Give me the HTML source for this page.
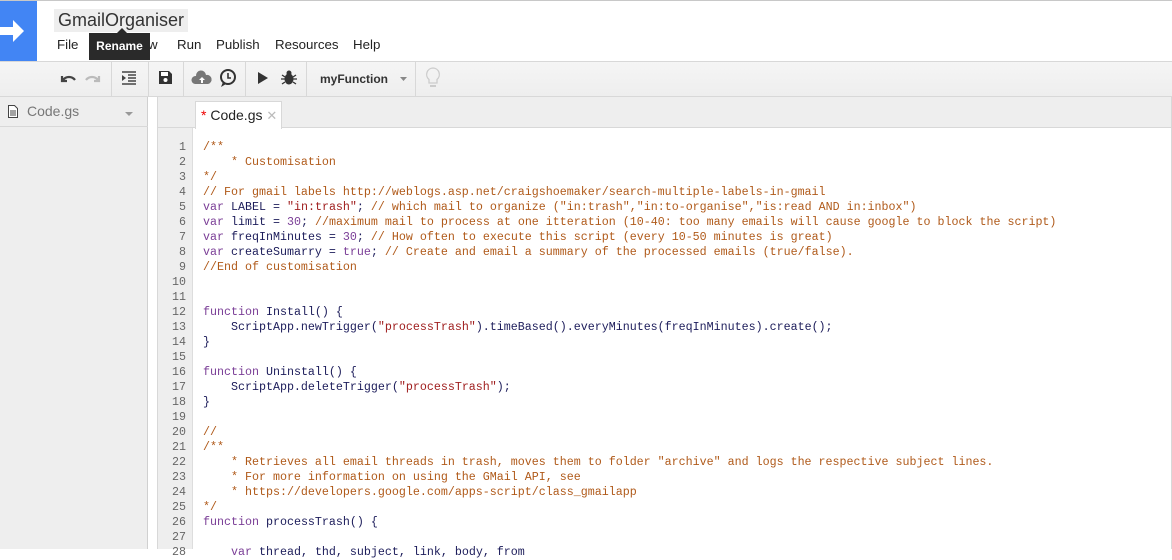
<!DOCTYPE html>
<html><head><meta charset="utf-8"><style>
*{margin:0;padding:0;box-sizing:border-box}
body{width:1172px;height:549px;overflow:hidden;background:#fff;font-family:"Liberation Sans",Arial,sans-serif;position:relative}
.abs{position:absolute}
#topline{left:0;top:0;width:1172px;height:1px;background:#c8c8c8}
#logo{left:0;top:1px;width:37px;height:60px;background:#4285f4}
#title{left:54px;top:9px;height:23px;padding:0 4px;background:#eee;font-size:18px;color:#333;line-height:23px}
.menu{top:37px;font-size:13.3px;color:#222}
#tip{left:89px;top:33px;width:61px;height:27px;background:#2a2a2a;color:#fff;font-size:12px;font-weight:bold;text-align:center;line-height:27px}
#tb{left:0;top:61px;width:1172px;height:36px;background:linear-gradient(#f5f5f5,#eee);border-top:1px solid #d8d8d8;border-bottom:1px solid #d8d8d8}
.sep{top:62px;width:1px;height:35px;background:#d8d8d8}
#side{left:0;top:97px;width:148px;height:452px;background:#eee;border-right:1px solid #d0d0d0}
#sidehead{left:0;top:97px;width:148px;height:30px;border-bottom:1px solid #d8d8d8}
#tabs{left:157px;top:97px;width:1015px;height:31px;background:#eee;border-bottom:1px solid #d8d8d8;border-left:1px solid #d8d8d8}
#tab{left:195px;top:101px;width:87px;height:28px;background:#fff;border:1px solid #d8d8d8;border-bottom:none;font-size:14px;color:#222;line-height:26px;padding-left:5px}
#gut{left:157px;top:128px;width:36px;height:421px;background:#eee;border-right:1px solid #ddd;border-left:1px solid #d8d8d8}
#rb{left:1171px;top:97px;width:1px;height:452px;background:#d8d8d8}
pre{font-family:"Liberation Mono",monospace;font-size:11.67px;line-height:15px}
#nums{left:157px;top:140px;width:29px;text-align:right;color:#666}
#code{left:203px;top:140px;color:#1c1c5a}
.k{color:#7a3d96}.c{color:#b05a1a}.s{color:#a02020}.n{color:#7a3d96}
</style></head><body>
<div class="abs" id="topline"></div>
<div class="abs" id="logo"><svg width="37" height="60"><path d="M0 26h13v-7l11 11-11 11v-7H0z" fill="#fff"/></svg></div>
<div class="abs" id="title">GmailOrganiser</div>
<div class="abs menu" style="left:57px">File</div>
<div class="abs menu" style="left:148px">w</div>
<div class="abs menu" style="left:177px">Run</div>
<div class="abs menu" style="left:216px">Publish</div>
<div class="abs menu" style="left:275px">Resources</div>
<div class="abs menu" style="left:353px">Help</div>
<div class="abs" id="tip">Rename</div>
<svg class="abs" style="left:116px;top:27px" width="12" height="7"><path d="M0 7L6 1L12 7z" fill="#2a2a2a"/></svg>
<div class="abs" id="tb"></div>
<div class="abs sep" style="left:111px"></div><div class="abs sep" style="left:148px"></div><div class="abs sep" style="left:183px"></div><div class="abs sep" style="left:245px"></div><div class="abs sep" style="left:306px"></div><div class="abs sep" style="left:415px"></div>
<svg class="abs" style="left:58px;top:70px" width="50" height="18"><path d="M4 6v5h5M5 10c3-4 9-4 12 0" stroke="#444" stroke-width="2.2" fill="none"/><path d="M41 6v5h-5M40 10c-3-4-9-4-12 0" stroke="#bbb" stroke-width="2.2" fill="none"/></svg>
<svg class="abs" style="left:120px;top:70px" width="18" height="16"><path d="M2 2h14M8 5h8M8 8h8M8 11h8M2 14h14" stroke="#444" stroke-width="1.5"/><path d="M2 5l4 3-4 3z" fill="#444"/></svg>
<svg class="abs" style="left:158px;top:70px" width="15" height="15"><path d="M1 1h10l3 3v10H1z" fill="#333"/><rect x="3" y="2" width="7" height="4" fill="#fff"/><circle cx="7.5" cy="10" r="2" fill="#fff"/></svg>
<svg class="abs" style="left:191px;top:68px" width="48" height="20"><path d="M4 16a4 4 0 0 1 1-8a5 5 0 0 1 10-1a4 4 0 0 1 2 9z" fill="#777"/><path d="M8 12l3-3 3 3h-2v3h-2v-3z" fill="#fff"/><circle cx="37" cy="9" r="7" fill="none" stroke="#333" stroke-width="2"/><path d="M37 5v5h3" stroke="#333" stroke-width="1.6" fill="none"/><path d="M32 14l-2 5 5-3" fill="#333"/></svg>
<svg class="abs" style="left:257px;top:71px" width="12" height="14"><path d="M1 1l10 6-10 6z" fill="#333"/></svg>
<svg class="abs" style="left:281px;top:69px" width="16" height="17"><ellipse cx="8" cy="10" rx="4.5" ry="5.5" fill="#333"/><circle cx="8" cy="4" r="2.5" fill="#333"/><path d="M1 6l3 2M15 6l-3 2M0 10h4M16 10h-4M1 15l3-2M15 15l-3-2" stroke="#333" stroke-width="1.3"/></svg>
<div class="abs" style="left:320px;top:72px;font-size:12px;font-weight:bold;color:#333">myFunction</div>
<svg class="abs" style="left:400px;top:77px" width="7" height="4"><path d="M0 0h7L3.5 4z" fill="#888"/></svg>
<svg class="abs" style="left:425px;top:67px" width="16" height="23"><path d="M8 1a6.5 6.5 0 0 0-4 11.5V16h8v-3.5A6.5 6.5 0 0 0 8 1z" fill="none" stroke="#ccc" stroke-width="1.3"/><rect x="5" y="18" width="6" height="2" fill="#ccc"/></svg>
<div class="abs" id="side"></div>
<div class="abs" id="sidehead"></div>
<svg class="abs" style="left:8px;top:105px" width="10" height="13"><path d="M.5.5h6l3 3v9h-9z" fill="#fff" stroke="#444"/><path d="M2 6h6M2 8h6M2 10h6" stroke="#444"/></svg>
<div class="abs" style="left:27px;top:103px;font-size:14px;color:#777">Code.gs</div>
<svg class="abs" style="left:125px;top:112px" width="8" height="4"><path d="M0 0h8L4 4z" fill="#999"/></svg>
<div class="abs" id="tabs"></div>
<div class="abs" id="tab"><span style="color:#e00">*</span> Code.gs <span style="color:#bbb;font-size:13px">✕</span></div>
<div class="abs" id="gut"></div>
<div class="abs" id="rb"></div>
<pre class="abs" id="nums">1
2
3
4
5
6
7
8
9
10
11
12
13
14
15
16
17
18
19
20
21
22
23
24
25
26
27
28</pre>
<pre class="abs" id="code"><span class="c">/**
    * Customisation
*/
// For gmail labels http://weblogs.asp.net/craigshoemaker/search-multiple-labels-in-gmail</span>
<span class="k">var</span> LABEL = <span class="s">"in:trash"</span>; <span class="c">// which mail to organize ("in:trash","in:to-organise","is:read AND in:inbox")</span>
<span class="k">var</span> limit = <span class="n">30</span>; <span class="c">//maximum mail to process at one itteration (10-40: too many emails will cause google to block the script)</span>
<span class="k">var</span> freqInMinutes = <span class="n">30</span>; <span class="c">// How often to execute this script (every 10-50 minutes is great)</span>
<span class="k">var</span> createSumarry = <span class="k">true</span>; <span class="c">// Create and email a summary of the processed emails (true/false).</span>
<span class="c">//End of customisation</span>


<span class="k">function</span> Install() {
    ScriptApp.newTrigger(<span class="s">"processTrash"</span>).timeBased().everyMinutes(freqInMinutes).create();
}

<span class="k">function</span> Uninstall() {
    ScriptApp.deleteTrigger(<span class="s">"processTrash"</span>);
}

<span class="c">//
/**
    * Retrieves all email threads in trash, moves them to folder "archive" and logs the respective subject lines.
    * For more information on using the GMail API, see
    * https://developers.google.com/apps-script/class_gmailapp
*/</span>
<span class="k">function</span> processTrash() {

    <span class="k">var</span> thread, thd, subject, link, body, from</pre>
</body></html>
